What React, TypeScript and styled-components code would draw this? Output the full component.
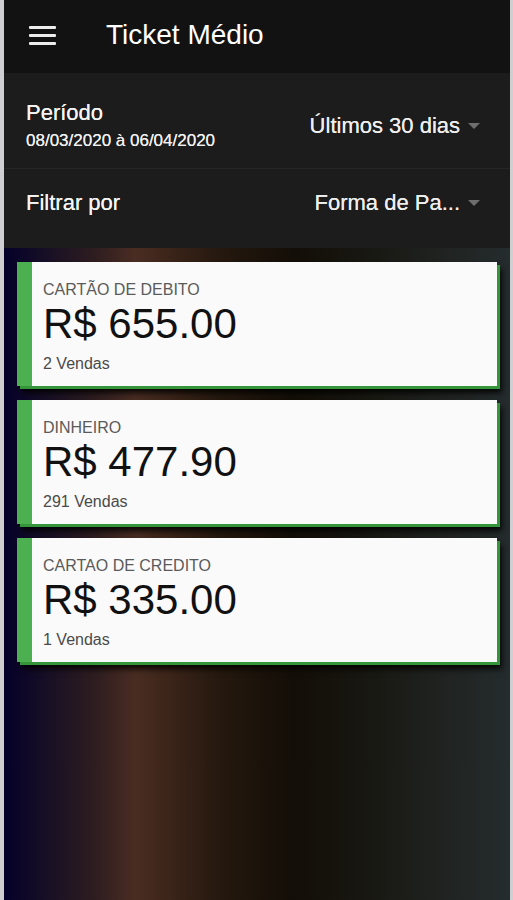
import React from "react";
import styled, { createGlobalStyle } from "styled-components";

const GlobalStyle = createGlobalStyle`
  html, body {
    margin: 0;
    padding: 0;
    background: #cfcfd2;
  }
  body {
    font-family: "Liberation Sans", Arial, sans-serif;
  }
`;

export const Screen = styled.div`
  display: flex;
  flex-direction: column;
  min-height: 900px;
  margin: 0 3px 0 4px;
  background: #1c1c1c;
`;

export const TopBar = styled.header`
  display: flex;
  align-items: center;
  height: 73px;
  padding: 0 0 3px 25px;
  box-sizing: border-box;
  background: #121212;
`;

export const MenuButton = styled.div`
  display: flex;
  flex-direction: column;
  justify-content: space-between;
  width: 27px;
  height: 19px;
  margin-right: 50px;

  span {
    display: block;
    height: 3px;
    border-radius: 1px;
    background: #ececec;
  }
`;

export const Title = styled.h1`
  margin: 0;
  font-size: 28px;
  font-weight: 400;
  color: #ffffff;
`;

export const FilterPanel = styled.section`
  background: #1c1c1c;
`;

export const FilterRow = styled.div<{ $height: number; $padTop?: number; $padBottom?: number; $divider?: boolean }>`
  display: flex;
  align-items: center;
  justify-content: space-between;
  box-sizing: border-box;
  height: ${(p) => p.$height}px;
  padding: ${(p) => p.$padTop ?? 0}px 30px ${(p) => p.$padBottom ?? 0}px 22px;
  border-bottom: ${(p) => (p.$divider ? "1px solid #262626" : "none")};
`;

export const LabelBlock = styled.div`
  display: flex;
  flex-direction: column;
  gap: 5px;
`;

export const FilterLabel = styled.div`
  font-size: 22px;
  line-height: 26px;
  color: #f4f4f4;
  text-shadow: 0 0 0.6px #f4f4f4;
`;

export const DateRange = styled.div`
  font-size: 17px;
  line-height: 20px;
  color: #f0f0f0;
  text-shadow: 0 0 0.6px #f0f0f0;
`;

export const Select = styled.div`
  display: flex;
  align-items: center;
  gap: 8px;
  font-size: 22px;
  line-height: 26px;
  color: #eeeeee;
  text-shadow: 0 0 0.6px #eeeeee;
`;

export const Caret = styled.span`
  width: 0;
  height: 0;
  border-left: 6px solid transparent;
  border-right: 6px solid transparent;
  border-top: 6px solid #6e6e6e;
`;

export const Content = styled.main`
  flex: 1;
  display: flex;
  flex-direction: column;
  gap: 14px;
  padding: 14px 13px;
  background: linear-gradient(
    to right,
    #05002a 0%,
    #140d26 7%,
    #2e1d20 18%,
    #4a2d22 26%,
    #3b2419 33%,
    #26190f 42%,
    #130e07 57%,
    #171610 70%,
    #1e201d 83%,
    #252c2d 100%
  );
`;

export const Card = styled.article`
  box-sizing: border-box;
  height: 124px;
  padding: 18px 11px 12px 11px;
  background: #fafafa;
  border-left: 15px solid #4caf50;
  box-shadow: 3px 3px 0 #35953a, 5px 7px 6px rgba(0, 0, 0, 0.85);
`;

export const CardLabel = styled.div`
  font-size: 16px;
  line-height: 20px;
  color: #5a5a5a;
`;

export const CardValue = styled.div`
  font-size: 42px;
  line-height: 48px;
  color: #111111;
`;

export const CardCount = styled.div`
  margin-top: 6px;
  font-size: 16px;
  line-height: 20px;
  color: #4a4a4a;
`;

const payments = [
  { label: "CARTÃO DE DEBITO", value: "R$ 655.00", count: "2 Vendas" },
  { label: "DINHEIRO", value: "R$ 477.90", count: "291 Vendas" },
  { label: "CARTAO DE CREDITO", value: "R$ 335.00", count: "1 Vendas" },
];

const App = () => {
  return (
    <>
      <GlobalStyle />
      <Screen>
        <TopBar>
          <MenuButton>
            <span />
            <span />
            <span />
          </MenuButton>
          <Title>Ticket Médio</Title>
        </TopBar>

        <FilterPanel>
          <FilterRow $height={96} $padTop={10} $divider>
            <LabelBlock>
              <FilterLabel>Período</FilterLabel>
              <DateRange>08/03/2020 à 06/04/2020</DateRange>
            </LabelBlock>
            <Select>
              Últimos 30 dias
              <Caret />
            </Select>
          </FilterRow>
          <FilterRow $height={79} $padBottom={12}>
            <FilterLabel>Filtrar por</FilterLabel>
            <Select>
              Forma de Pa...
              <Caret />
            </Select>
          </FilterRow>
        </FilterPanel>

        <Content>
          {payments.map((p) => (
            <Card key={p.label}>
              <CardLabel>{p.label}</CardLabel>
              <CardValue>{p.value}</CardValue>
              <CardCount>{p.count}</CardCount>
            </Card>
          ))}
        </Content>
      </Screen>
    </>
  );
};

export default App;
